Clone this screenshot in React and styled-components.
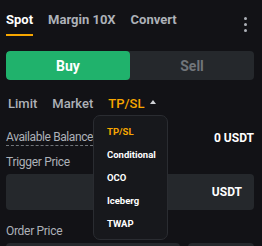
import React, { useState } from "react";
import styled, { createGlobalStyle } from "styled-components";

const GlobalStyle = createGlobalStyle`
  html, body {
    margin: 0;
    padding: 0;
    background: #121216;
    overflow: hidden;
  }
  body {
    font-family: Roboto, "Noto Sans", sans-serif;
    -webkit-font-smoothing: antialiased;
  }
`;

const tabs = ["Spot", "Margin 10X", "Convert"];
const orderTypes = ["Limit", "Market", "TP/SL"];
const menuItems = ["TP/SL", "Conditional", "OCO", "Iceberg", "TWAP"];

const App = () => {
  const [tab, setTab] = useState("Spot");
  const [side, setSide] = useState("buy");
  const [orderType, setOrderType] = useState("TP/SL");
  const [menuChoice, setMenuChoice] = useState("TP/SL");

  return (
    <>
      <GlobalStyle />
      <Panel>
        <TabBar>
          {tabs.map((t) => (
            <Tab key={t} $active={tab === t} onClick={() => setTab(t)}>
              {t}
            </Tab>
          ))}
          <MoreButton aria-label="more">
            <Dot />
            <Dot />
            <Dot />
          </MoreButton>
        </TabBar>

        <SideSwitch>
          <SideButton $active={side === "buy"} $kind="buy" onClick={() => setSide("buy")}>
            Buy
          </SideButton>
          <SideButton $active={side === "sell"} $kind="sell" onClick={() => setSide("sell")}>
            Sell
          </SideButton>
        </SideSwitch>

        <TypeRow>
          {orderTypes.map((t) => (
            <TypeItem key={t} $active={orderType === t} onClick={() => setOrderType(t)}>
              {t}
              {t === "TP/SL" && (
                <Caret viewBox="0 0 6 4">
                  <path d="M0 4 L3 0 L6 4 Z" fill="currentColor" />
                </Caret>
              )}
            </TypeItem>
          ))}
          <Menu>
            {menuItems.map((m) => (
              <MenuItem key={m} $active={menuChoice === m} onClick={() => setMenuChoice(m)}>
                {m}
              </MenuItem>
            ))}
          </Menu>
        </TypeRow>

        <BalanceRow>
          <BalanceLabel>Available Balance</BalanceLabel>
          <BalanceValue>0 USDT</BalanceValue>
        </BalanceRow>

        <FieldLabel $gap="8px">Trigger Price</FieldLabel>
        <InputBox>
          <Unit>USDT</Unit>
        </InputBox>

        <FieldLabel $gap="13px">Order Price</FieldLabel>
        <SplitRow>
          <InputBox $width="174px" />
          <InputBox $width="66px" />
        </SplitRow>
      </Panel>
    </>
  );
};

export default App;

// Styled Components

const Panel = styled.div`
  width: 262px;
  height: 246px;
  overflow: hidden;
  box-sizing: border-box;
  padding: 0 8px 0 6px;
`;

const TabBar = styled.div`
  display: flex;
  align-items: flex-start;
  gap: 15px;
  height: 36px;
  padding-top: 12px;
  box-sizing: border-box;
`;

const Tab = styled.div`
  font-size: 13px;
  font-weight: 700;
  line-height: 16px;
  height: 24px;
  box-sizing: border-box;
  color: ${(p) => (p.$active ? "#ffffff" : "#adb1b8")};
  border-bottom: 2px solid ${(p) => (p.$active ? "#f7a600" : "transparent")};
  cursor: pointer;
`;

const MoreButton = styled.div`
  margin-left: auto;
  margin-right: 7px;
  margin-top: 5px;
  display: flex;
  flex-direction: column;
  gap: 3px;
`;

const Dot = styled.span`
  width: 3px;
  height: 3px;
  border-radius: 50%;
  background: #adb1b8;
`;

const SideSwitch = styled.div`
  display: flex;
  margin-top: 15px;
  height: 29px;
  background: #25282c;
  border-radius: 4px;
  overflow: hidden;
`;

const SideButton = styled.div`
  flex: 1;
  display: flex;
  align-items: center;
  justify-content: center;
  font-size: 14px;
  font-weight: 700;
  border-radius: 4px;
  cursor: pointer;
  background: ${(p) => (p.$active ? (p.$kind === "buy" ? "#20b26c" : "#ef454a") : "transparent")};
  color: ${(p) => (p.$active ? "#ffffff" : "#71757a")};
`;

const TypeRow = styled.div`
  position: relative;
  display: flex;
  align-items: center;
  gap: 15px;
  height: 20px;
  margin-top: 13px;
  padding-left: 2px;
  z-index: 5;
`;

const TypeItem = styled.div`
  display: flex;
  align-items: center;
  gap: 6px;
  font-size: 13px;
  font-weight: 500;
  color: ${(p) => (p.$active ? "#f7a600" : "#adb1b8")};
  cursor: pointer;
  &:last-of-type {
    margin-left: 3px;
  }
`;

const Caret = styled.svg`
  width: 6px;
  height: 4px;
  color: #d0d2d6;
  margin-bottom: 2px;
`;

const Menu = styled.div`
  position: absolute;
  left: 87px;
  top: 22px;
  width: 73px;
  padding: 4px 0;
  background: #17181c;
  border: 1px solid #2a2c31;
  border-radius: 7px;
`;

const MenuItem = styled.div`
  height: 23px;
  display: flex;
  align-items: center;
  padding-left: 13px;
  font-size: 9.5px;
  font-weight: 700;
  color: ${(p) => (p.$active ? "#f7a600" : "#ffffff")};
  cursor: pointer;
`;

const BalanceRow = styled.div`
  display: flex;
  justify-content: space-between;
  align-items: center;
  margin-top: 17px;
  height: 16px;
`;

const BalanceLabel = styled.span`
  font-size: 12px;
  letter-spacing: -0.4px;
  color: #adb1b8;
  border-bottom: 1px dashed #71757a;
  line-height: 15px;
`;

const BalanceValue = styled.span`
  font-size: 12px;
  font-weight: 700;
  color: #ffffff;
`;

const FieldLabel = styled.div`
  font-size: 12px;
  letter-spacing: -0.3px;
  color: #adb1b8;
  margin-top: ${(p) => p.$gap};
  height: 16px;
  line-height: 16px;
`;

const InputBox = styled.div`
  flex: ${(p) => (p.$width ? `0 0 ${p.$width}` : "none")};
  height: 36px;
  margin-top: 4px;
  background: #25282c;
  border-radius: 4px;
  display: flex;
  align-items: center;
  justify-content: flex-end;
  padding: 0 12px;
  box-sizing: border-box;
`;

const Unit = styled.span`
  font-size: 12px;
  font-weight: 700;
  color: #ffffff;
`;

const SplitRow = styled.div`
  display: flex;
  gap: 8px;
`;
